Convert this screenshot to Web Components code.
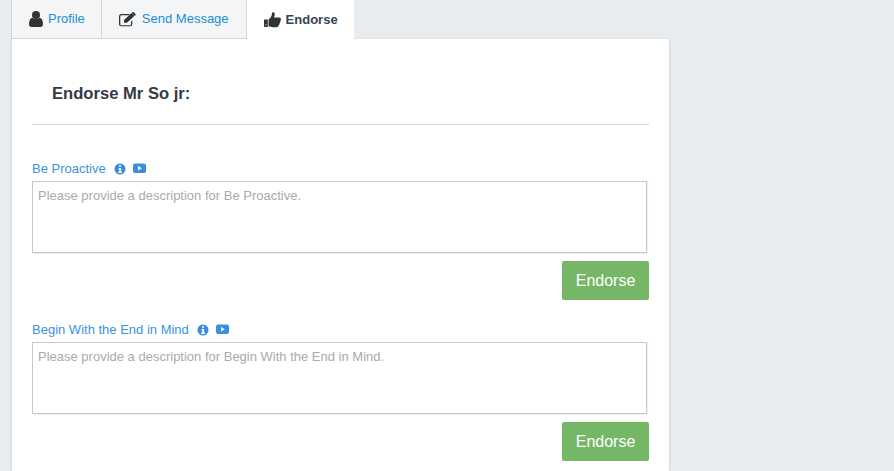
<!DOCTYPE html>
<html>
<head>
<meta charset="utf-8">
<style>
  html, body { margin: 0; height: 471px; overflow: hidden; background: #e9ecef; font-family: "Liberation Sans", sans-serif; }
</style>
</head>
<body>
<endorse-page>
  <tab-item slot="tabs" icon="user" label="Profile"></tab-item>
  <tab-item slot="tabs" icon="edit" label="Send Message"></tab-item>
  <tab-item slot="tabs" icon="thumb" label="Endorse" active></tab-item>
  <endorse-panel name="Mr So jr">
    <endorse-field habit="Be Proactive"></endorse-field>
    <endorse-field habit="Begin With the End in Mind"></endorse-field>
  </endorse-panel>
</endorse-page>
<script>
// svg paths for the small icons
const icons = {
  user: '<svg width="14" height="16" viewBox="0 0 14 16"><circle cx="7" cy="4" r="4" fill="#333"/><path d="M0 13c0-4 1.500-6 3.500-6.300C4.500 7.500 5.600 8 7 8s2.500-.5 3.500-1.300C12.500 7 14 9 14 13c0 2-1 3-2.500 3h-9C1 16 0 15 0 13z" fill="#333"/></svg>',
  edit: '<svg style="margin-top:1px" width="18" height="15" viewBox="0 0 18 16" preserveAspectRatio="none"><path d="M12 13v-3l1.300-1.300V13a2.300 2.300 0 0 1-2.300 2.300H2.300A2.300 2.300 0 0 1 0 13V4.500a2.300 2.300 0 0 1 2.300-2.300h8.500l-1.300 1.300H2.300a1 1 0 0 0-1 1V13a1 1 0 0 0 1 1H11a1 1 0 0 0 1-1z" fill="#333"/><path d="M5 8.500 12.500 1l3 3L8 11.500H5zM13.400.3c.4-.4 1-.4 1.400 0l1.700 1.700c.4.400.4 1 0 1.400l-.6.600-3-3z" fill="#333"/></svg>',
  thumb: '<svg style="margin-top:2px" width="17" height="16" viewBox="0 0 17 16"><path fill-rule="evenodd" d="M0 7.500h3.800V15H0zM1.400 12.400v1.200h1v-1.200z" fill="#333"/><path d="M4.500 7.500C6.500 6 7.800 4 8 1.500 8 .5 9 0 10 .5c1.300.8 1 3-.2 5H15c1.200 0 2 .9 2 1.800 0 .7-.3 1.200-.7 1.500.3 1 0 1.800-.7 2.300.2 1-.2 1.800-1 2.200 0 1.200-.8 2-2.200 2H9c-1.800 0-3-.8-4.500-1z" fill="#333"/></svg>',
  info: '<svg width="12" height="12" viewBox="0 0 12 12"><circle cx="6" cy="6" r="5.500" fill="#3b8ede"/><path d="M5 2.200h2v1.600H5zM4.600 5h2.500v3.600h.8V10H4.300V8.600h.9V6.300h-.6z" fill="#fff"/></svg>',
  video: '<svg width="13" height="11" viewBox="0 0 13 11"><rect y=".5" width="13" height="9.500" rx="2" fill="#3b8ede"/><path d="M5 3v4.500l3.800-2.250z" fill="#fff"/></svg>'
};

class EndorsePage extends HTMLElement {
  constructor() {
    super();
    this.attachShadow({ mode: 'open' });
    this.shadowRoot.innerHTML = `
      <style>
        :host { display: block; padding-left: 11px; width: 658px; }
        .tabs { display: flex; height: 39px; }
      </style>
      <div class="tabs"><slot name="tabs"></slot></div>
      <slot></slot>
    `;
  }
}

class TabItem extends HTMLElement {
  constructor() {
    super();
    this.attachShadow({ mode: 'open' });
  }
  connectedCallback() {
    this.shadowRoot.innerHTML = `
      <style>
        :host {
          display: flex; align-items: center; gap: 5px;
          box-sizing: border-box; height: 39px; padding: 0 17px 1px;
          background: #f4f5f7; border: 1px solid #d4d4d4; border-top: 0;
          font-size: 13px; color: #1a8fd6;
        }
        :host(:first-child) { padding-right: 16px; }
        :host(:not(:first-child)) { border-left: 0; }
        :host([active]) { background: #fff; border: 0; color: #3a4350; font-weight: 700; padding: 0 16px 1px 17px; }
        svg { display: block; }
      </style>
      ${icons[this.getAttribute('icon')]}<span>${this.getAttribute('label')}</span>
    `;
  }
}

class EndorsePanel extends HTMLElement {
  constructor() {
    super();
    this.attachShadow({ mode: 'open' });
  }
  connectedCallback() {
    this.shadowRoot.innerHTML = `
      <style>
        :host {
          display: block; box-sizing: border-box; height: 432px; padding: 0 20px; margin-left: 1px;
          background: #fff; box-shadow: 0 1px 3px rgba(0,0,0,.15);
        }
        h2 {
          margin: 0 0 35px; padding: 45px 20px 20px; height: 86px; box-sizing: border-box;
          font: 700 16.6px/19px "Liberation Sans", sans-serif; color: #333a48;
          border-bottom: 1px solid #d6d6d6;
        }
      </style>
      <h2>Endorse ${this.getAttribute('name')}:</h2>
      <slot></slot>
    `;
  }
}

class EndorseField extends HTMLElement {
  constructor() {
    super();
    this.attachShadow({ mode: 'open' });
  }
  connectedCallback() {
    const habit = this.getAttribute('habit');
    this.shadowRoot.innerHTML = `
      <style>
        :host { display: block; margin-bottom: 21px; }
        .label { display: flex; align-items: center; height: 17px; margin-bottom: 4px; font-size: 13px; color: #3b93dd; }
        .label span { margin-right: 8px; }
        .label svg + svg { margin-left: 7px; }
        textarea {
          display: block; box-sizing: border-box; width: 615px; height: 72px; padding: 6px 5px;
          border: 1px solid #c8c8c8; box-shadow: 1px 1px 1px rgba(0,0,0,.06); outline: 0; resize: none;
          font: 13px/15px "Liberation Sans", sans-serif; border-radius: 0;
        }
        textarea::placeholder { color: #aaa; opacity: 1; }
        .actions { display: flex; justify-content: flex-end; margin-top: 8px; }
        button {
          width: 87px; height: 39px; border: 0; border-radius: 2px; background: #76b767; color: #fff;
          font: 16px "Liberation Sans", sans-serif;
        }
      </style>
      <div class="label"><span>${habit}</span>${icons.info}${icons.video}</div>
      <textarea placeholder="Please provide a description for ${habit}."></textarea>
      <div class="actions"><button>Endorse</button></div>
    `;
  }
}

customElements.define('endorse-page', EndorsePage);
customElements.define('tab-item', TabItem);
customElements.define('endorse-panel', EndorsePanel);
customElements.define('endorse-field', EndorseField);
</script>
</body>
</html>
